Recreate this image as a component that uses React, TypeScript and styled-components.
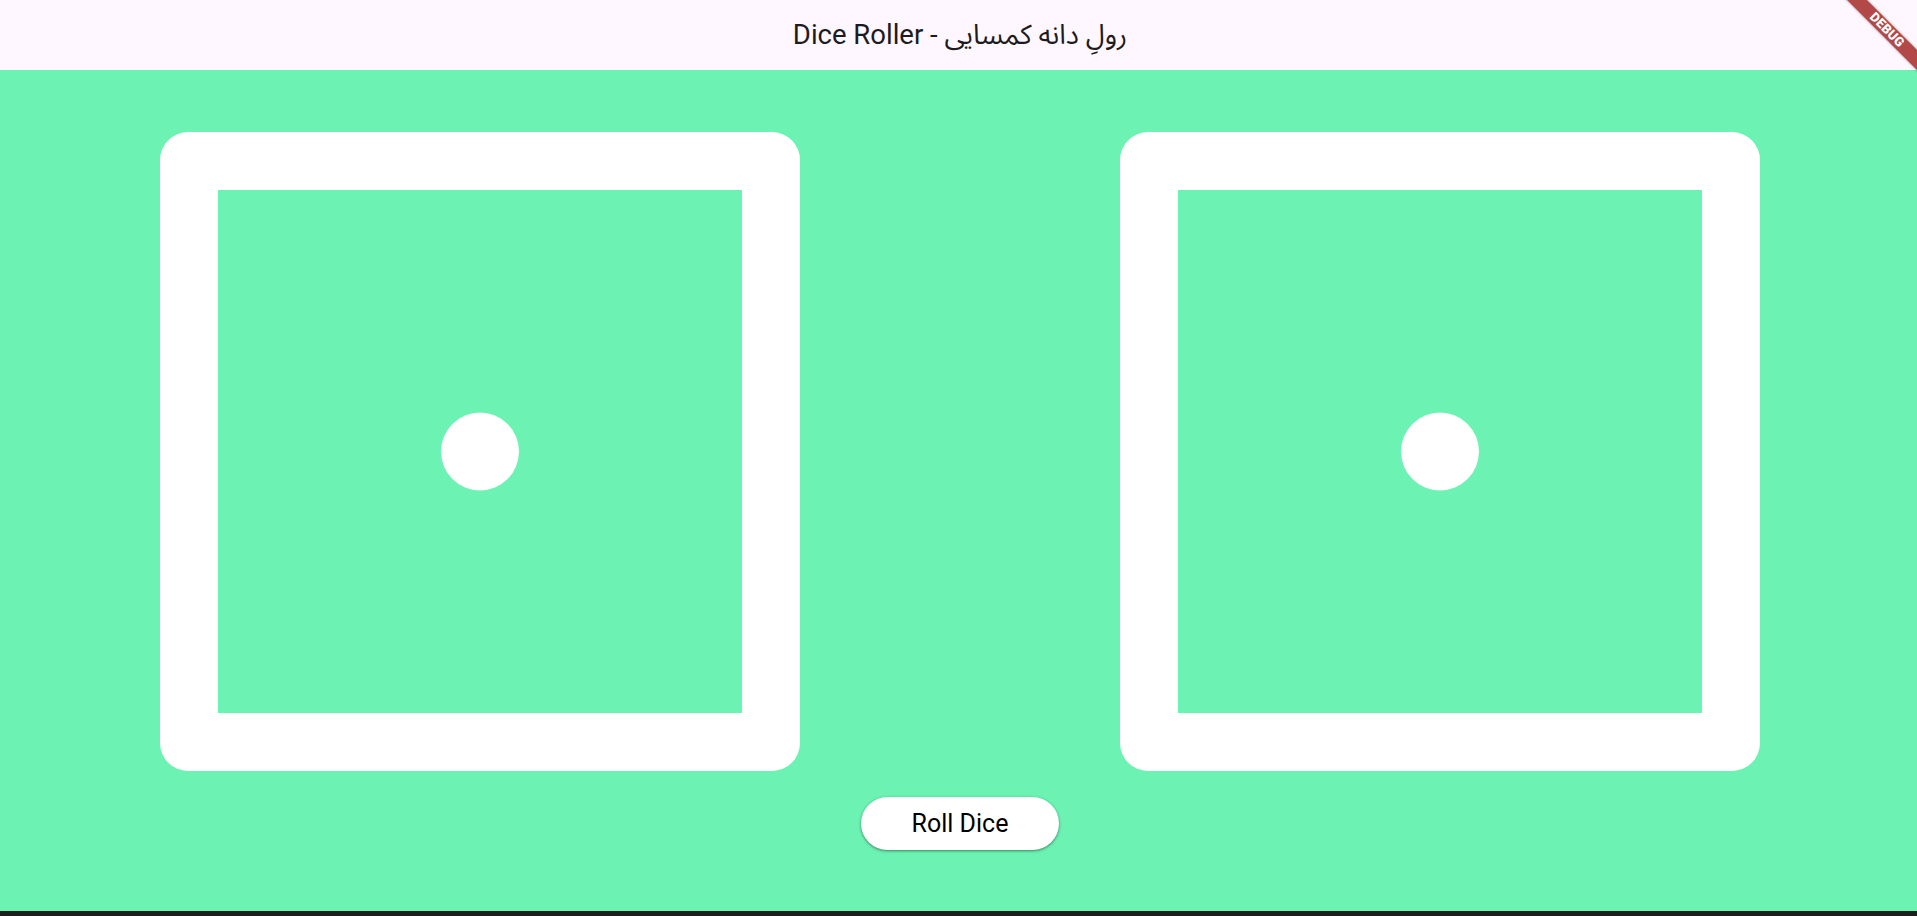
import React, { useState } from "react";
import styled, { createGlobalStyle } from "styled-components";

const Global = createGlobalStyle`
  html, body { margin: 0; padding: 0; height: 100%; }
  body { font-family: Roboto, "Noto Sans", sans-serif; overflow: hidden; }
  #root { height: 100%; }
`;

const Viewport = styled.div`
  position: relative;
  width: 100%;
  height: 916px;
  overflow: hidden;
  background: #6cf2b2;
`;

const Page = styled.div`
  display: flex;
  flex-direction: column;
  width: 1920px;
  height: 916px;
  background: #6cf2b2;
`;

const AppBar = styled.header`
  flex: 0 0 70px;
  display: flex;
  align-items: center;
  justify-content: center;
  background: #fef7ff;
`;

const Title = styled.h1`
  margin: 0;
  font-family: Roboto, "Noto Sans Arabic", "DejaVu Sans", sans-serif;
  font-weight: 400;
  font-size: 27.5px;
  color: #1d1b20;
  letter-spacing: 0;
`;

const Body = styled.main`
  flex: 1;
  display: flex;
  flex-direction: column;
  align-items: stretch;
  justify-content: center;
  gap: 26px;
`;

const DiceRow = styled.div`
  display: flex;
`;

const DieSlot = styled.div`
  flex: 1;
  display: flex;
  justify-content: center;
`;

const ButtonRow = styled.div`
  display: flex;
  justify-content: center;
`;

const RollButton = styled.button`
  width: 198px;
  height: 53px;
  border: none;
  border-radius: 27px;
  background: #ffffff;
  color: #000000;
  font-family: Roboto, sans-serif;
  font-size: 25px;
  font-weight: 400;
  cursor: pointer;
  box-shadow: 0 1px 2px rgba(0, 0, 0, 0.3), 0 1px 3px 1px rgba(0, 0, 0, 0.12);
`;

const Footer = styled.div`
  flex: 0 0 5px;
  background: #1e1e1e;
`;

const Banner = styled.div`
  position: absolute;
  top: 30px;
  right: 30px;
  width: 170px;
  height: 14px;
  margin: -7px -85px 0 0;
  transform: rotate(45deg);
  background: rgba(168, 48, 48, 0.88);
  box-shadow: 0 0 3px rgba(0, 0, 0, 0.4);
  color: #fff;
  font-family: Roboto, "DejaVu Sans", sans-serif;
  font-weight: 900;
  font-size: 13px;
  line-height: 14px;
  text-align: center;
  letter-spacing: 0.2px;
  pointer-events: none;
`;

const pipLayouts: Record<number, [number, number][]> = {
  1: [[0.5, 0.5]],
  2: [[0.3, 0.3], [0.7, 0.7]],
  3: [[0.3, 0.3], [0.5, 0.5], [0.7, 0.7]],
  4: [[0.3, 0.3], [0.7, 0.3], [0.3, 0.7], [0.7, 0.7]],
  5: [[0.3, 0.3], [0.7, 0.3], [0.5, 0.5], [0.3, 0.7], [0.7, 0.7]],
  6: [[0.3, 0.28], [0.7, 0.28], [0.3, 0.5], [0.7, 0.5], [0.3, 0.72], [0.7, 0.72]],
};

const Die: React.FC<{ value: number }> = ({ value }) => {
  const W = 640;
  const H = 639;
  const b = 58;
  const r = 28;
  const outer = `M${r} 0H${W - r}A${r} ${r} 0 0 1 ${W} ${r}V${H - r}A${r} ${r} 0 0 1 ${W - r} ${H}H${r}A${r} ${r} 0 0 1 0 ${H - r}V${r}A${r} ${r} 0 0 1 ${r} 0Z`;
  const inner = `M${b} ${b}V${H - b}H${W - b}V${b}Z`;
  return (
    <svg width={W} height={H} viewBox={`0 0 ${W} ${H}`}>
      <path d={outer + inner} fill="#fff" fillRule="evenodd" />
      {pipLayouts[value].map(([x, y], i) => (
        <circle key={i} cx={b + x * (W - 2 * b)} cy={b + y * (H - 2 * b)} r={39} fill="#fff" />
      ))}
    </svg>
  );
};

export default function App() {
  const [dice, setDice] = useState<[number, number]>([1, 1]);
  const roll = () =>
    setDice([1 + Math.floor(Math.random() * 6), 1 + Math.floor(Math.random() * 6)]);
  return (
    <>
      <Global />
      <Viewport>
        <Page>
          <AppBar>
            <Title>Dice Roller - رولِ دانه کمسایی</Title>
          </AppBar>
          <Body>
            <DiceRow>
              <DieSlot>
                <Die value={dice[0]} />
              </DieSlot>
              <DieSlot>
                <Die value={dice[1]} />
              </DieSlot>
            </DiceRow>
            <ButtonRow>
              <RollButton onClick={roll}>Roll Dice</RollButton>
            </ButtonRow>
          </Body>
          <Footer />
        </Page>
        <Banner>DEBUG</Banner>
      </Viewport>
    </>
  );
}
